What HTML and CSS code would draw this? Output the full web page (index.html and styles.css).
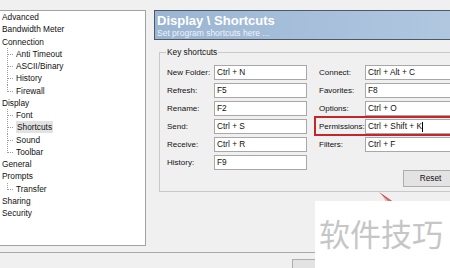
FILE: index.html
```html
<!DOCTYPE html>
<html>
<head>
<meta charset="utf-8">
<link rel="stylesheet" href="styles.css">
</head>
<body>
<div class="window">
  <div class="main">
    <div class="tree">
      <div class="node">Advanced</div>
      <div class="node">Bandwidth Meter</div>
      <div class="node">Connection</div>
      <div class="children">
        <div class="node child">Anti Timeout</div>
        <div class="node child">ASCII/Binary</div>
        <div class="node child">History</div>
        <div class="node child last">Firewall</div>
      </div>
      <div class="node">Display</div>
      <div class="children">
        <div class="node child">Font</div>
        <div class="node child"><span class="selected">Shortcuts</span></div>
        <div class="node child">Sound</div>
        <div class="node child last">Toolbar</div>
      </div>
      <div class="node">General</div>
      <div class="node">Prompts</div>
      <div class="children">
        <div class="node child last">Transfer</div>
      </div>
      <div class="node">Sharing</div>
      <div class="node">Security</div>
    </div>
    <div class="panel">
      <div class="banner">
        <div class="banner-title">Display \ Shortcuts</div>
        <div class="banner-sub">Set program shortcuts here ...</div>
      </div>
      <fieldset class="group">
        <legend class="group-title">Key shortcuts</legend>
        <div class="grid">
          <div class="lbl">New Folder:</div><div class="box">Ctrl + N</div>
          <div class="lbl right">Connect:</div><div class="box">Ctrl + Alt + C</div>
          <div class="lbl">Refresh:</div><div class="box">F5</div>
          <div class="lbl right">Favorites:</div><div class="box">F8</div>
          <div class="lbl">Rename:</div><div class="box">F2</div>
          <div class="lbl right">Options:</div><div class="box">Ctrl + O</div>
          <div class="lbl">Send:</div><div class="box">Ctrl + S</div>
          <div class="lbl right">Permissions:</div><div class="box">Ctrl + Shift + K<span class="caret"></span></div>
          <div class="lbl">Receive:</div><div class="box">Ctrl + R</div>
          <div class="lbl right">Filters:</div><div class="box">Ctrl + F</div>
          <div class="lbl">History:</div><div class="box">F9</div>
        </div>
        <div class="actions">
          <div class="btn reset">Reset</div>
        </div>
      </fieldset>
    </div>
  </div>
  <div class="footer">
    <div class="btn footbtn"></div>
  </div>

  <div class="highlight"></div>
  <svg class="arrow" width="18" height="12" viewBox="0 0 18 12">
    <polygon points="0,0 13,9 11,11" fill="#c4262d"/>
    <polygon points="3,3 14,10 13,12 8,12" fill="#d9a0a0" opacity="0.6"/>
  </svg>
  <div class="watermark">软件技巧</div>
</div>
</body>
</html>
```

FILE: styles.css
```css
html, body {
  margin: 0;
  padding: 0;
}
body {
  background: #f0f0f0;
  font-family: "Liberation Sans", Arial, sans-serif;
  font-size: 8.3px;
  color: #111;
}
.window {
  position: relative;
  width: 450px;
  height: 268px;
  overflow: hidden;
}
.main {
  display: flex;
  align-items: flex-start;
  box-sizing: border-box;
  height: 252px;
  padding-top: 10px;
}
.tree {
  flex: none;
  box-sizing: border-box;
  width: 146px;
  height: 236px;
  background: #fff;
  border: 1px solid #a2a2a2;
  border-left: none;
  padding-top: 0px;
  padding-left: 2px;
}
.node {
  height: 12.25px;
  line-height: 12.25px;
  white-space: nowrap;
}
.children {
  margin-left: 5px;
}
.child {
  padding-left: 9px;
  background-image:
    repeating-linear-gradient(to bottom, #9c9c9c 0 1px, transparent 1px 2px),
    repeating-linear-gradient(to right, #9c9c9c 0 1px, transparent 1px 2px);
  background-size: 1px 100%, 6px 1px;
  background-position: 0 0, 1px 6px;
  background-repeat: no-repeat;
}
.child.last {
  background-size: 1px 7px, 6px 1px;
}
.selected {
  background: #e2e2e2;
  padding: 1px 1px;
}
.panel {
  flex: none;
  width: 330px;
  margin-left: 8px;
}
.banner {
  box-sizing: border-box;
  height: 30px;
  border: 1px solid #4e5867;
  background: linear-gradient(to right, #9bb5d2, #a9c1dc 60%, #b3c9e1);
  padding-left: 2px;
  color: #fff;
}
.banner-title {
  font-weight: bold;
  font-size: 13px;
  line-height: 15px;
  padding-top: 2px;
}
.banner-sub {
  font-size: 8.5px;
  line-height: 10px;
  color: #eef3fa;
}
.group {
  margin: 7px 0 0 5px;
  padding: 8px 7px 4px 7px;
  border: 1px solid #c9c9c9;
  min-width: 0;
}
.group-title {
  padding: 0 1px;
  margin-left: -1px;
  line-height: 10px;
  font-size: 8.3px;
}
.grid {
  display: grid;
  grid-template-columns: 47px 93px 58px 93px;
  grid-auto-rows: 15px;
  row-gap: 3px;
}
.lbl {
  line-height: 15px;
  font-size: 8px;
  white-space: nowrap;
}
.lbl.right {
  padding-left: 12px;
}
.box {
  box-sizing: border-box;
  height: 15px;
  background: #fff;
  border: 1px solid #a8a8a8;
  padding-left: 2px;
  line-height: 13px;
  white-space: nowrap;
  display: flex;
  align-items: center;
}
.caret {
  display: inline-block;
  width: 1px;
  height: 10px;
  background: #000;
  margin-left: 0px;
}
.actions {
  display: flex;
  justify-content: flex-end;
  width: 291px;
}
.btn {
  box-sizing: border-box;
  border: 1px solid #adadad;
  background: #e3e3e3;
  text-align: center;
}
.reset {
  width: 55px;
  height: 17px;
  line-height: 15px;
}
.footer {
  border-top: 1px solid #a8a8a8;
  height: 15px;
  padding-top: 6px;
  padding-left: 292px;
  display: flex;
}
.footbtn {
  width: 75px;
  height: 23px;
}
.highlight {
  position: absolute;
  left: 314px;
  top: 116px;
  width: 200px;
  height: 16px;
  border: 2px solid #c3262c;
}
.arrow {
  position: absolute;
  left: 379px;
  top: 192px;
}
.watermark {
  position: absolute;
  left: 315px;
  top: 201px;
  width: 135px;
  height: 67px;
  background: #fff;
  box-sizing: border-box;
  padding-left: 4px;
  padding-top: 14px;
  font-family: "Noto Sans CJK SC", sans-serif;
  font-size: 31px;
  line-height: 36px;
  color: #c6c6c6;
  white-space: nowrap;
  letter-spacing: 0px;
}
```
